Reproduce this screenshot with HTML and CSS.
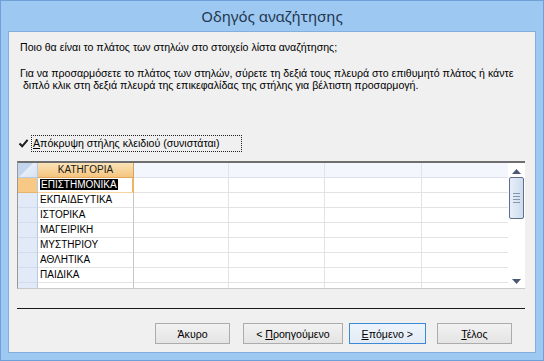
FILE: index.html
```html
<!DOCTYPE html>
<html lang="el">
<head>
  <meta charset="UTF-8">
  <title>Οδηγός αναζήτησης</title>
  <link rel="stylesheet" href="styles.css">
</head>
<body>
  <div class="window">
    <div class="titlebar">Οδηγός αναζήτησης</div>

    <div class="client">
      <p class="question">Ποιο θα είναι το πλάτος των στηλών στο στοιχείο λίστα αναζήτησης;</p>
      <p class="hint">Για να προσαρμόσετε το πλάτος των στηλών, σύρετε τη δεξιά τους πλευρά στο επιθυμητό πλάτος ή κάντε<br>&nbsp;διπλό κλικ στη δεξιά πλευρά της επικεφαλίδας της στήλης για βέλτιστη προσαρμογή.</p>

      <label class="check">
        <span class="box">
          <svg width="11" height="11" viewBox="0 0 11 11"><path d="M1.5 5.5 L4.2 8.3 L9.6 1.8" fill="none" stroke="#1b1b1b" stroke-width="2"/></svg>
        </span>
        <span class="check-label"><u>Α</u>πόκρυψη στήλης κλειδιού (συνιστάται)</span>
      </label>

      <!-- πλέγμα δεδομένων -->
      <div class="grid">
        <div class="grid-body">
          <div class="row head">
            <div class="sel corner"></div>
            <div class="cell c1 caption">ΚΑΤΗΓΟΡΙΑ</div>
            <div class="cell c2"></div>
            <div class="cell c3"></div>
            <div class="cell c4"></div>
            <div class="cell c5"></div>
          </div>
          <div class="row current">
            <div class="sel"></div>
            <div class="cell c1 focus"><span class="hl">ΕΠΙΣΤΗΜΟΝΙΚΑ</span></div>
            <div class="cell c2"></div><div class="cell c3"></div><div class="cell c4"></div><div class="cell c5"></div>
          </div>
          <div class="row">
            <div class="sel"></div>
            <div class="cell c1">ΕΚΠΑΙΔΕΥΤΙΚΑ</div>
            <div class="cell c2"></div><div class="cell c3"></div><div class="cell c4"></div><div class="cell c5"></div>
          </div>
          <div class="row">
            <div class="sel"></div>
            <div class="cell c1">ΙΣΤΟΡΙΚΑ</div>
            <div class="cell c2"></div><div class="cell c3"></div><div class="cell c4"></div><div class="cell c5"></div>
          </div>
          <div class="row">
            <div class="sel"></div>
            <div class="cell c1">ΜΑΓΕΙΡΙΚΗ</div>
            <div class="cell c2"></div><div class="cell c3"></div><div class="cell c4"></div><div class="cell c5"></div>
          </div>
          <div class="row">
            <div class="sel"></div>
            <div class="cell c1">ΜΥΣΤΗΡΙΟΥ</div>
            <div class="cell c2"></div><div class="cell c3"></div><div class="cell c4"></div><div class="cell c5"></div>
          </div>
          <div class="row">
            <div class="sel"></div>
            <div class="cell c1">ΑΘΛΗΤΙΚΑ</div>
            <div class="cell c2"></div><div class="cell c3"></div><div class="cell c4"></div><div class="cell c5"></div>
          </div>
          <div class="row">
            <div class="sel"></div>
            <div class="cell c1">ΠΑΙΔΙΚΑ</div>
            <div class="cell c2"></div><div class="cell c3"></div><div class="cell c4"></div><div class="cell c5"></div>
          </div>
          <div class="row">
            <div class="sel"></div>
            <div class="cell c1"></div>
            <div class="cell c2"></div><div class="cell c3"></div><div class="cell c4"></div><div class="cell c5"></div>
          </div>
        </div>
        <div class="scrollbar">
          <svg class="arrow" width="9" height="5" viewBox="0 0 9 5"><path d="M0 5 L4.5 0 L9 5 Z" fill="#4a5a72"/></svg>
          <div class="thumb"><span></span><span></span><span></span><span></span></div>
          <div class="track"></div>
          <svg class="arrow" width="9" height="5" viewBox="0 0 9 5"><path d="M0 0 L4.5 5 L9 0 Z" fill="#4a5a72"/></svg>
        </div>
      </div>

      <div class="separator"></div>

      <div class="buttons">
        <button class="btn">Άκυρο</button>
        <button class="btn wide">&lt; <u>Π</u>ροηγούμενο</button>
        <button class="btn default"><u>Ε</u>πόμενο &gt;</button>
        <button class="btn"><u>Τ</u>έλος</button>
      </div>
    </div>
  </div>
</body>
</html>
```

FILE: styles.css
```css
* {
  margin: 0;
  padding: 0;
  box-sizing: border-box;
}

body {
  font-family: 'Liberation Sans', Arial, sans-serif;
  font-size: 10.6px;
  color: #000;
  background: #9dc8f1;
}

.window {
  width: 544px;
  height: 361px;
  background: #9dc8f1;
  border: 1px solid #6f9fd6;
  padding: 0 7px 7px 7px;
  display: flex;
  flex-direction: column;
}

.titlebar {
  height: 30px;
  line-height: 30px;
  text-align: center;
  font-family: 'Noto Sans', 'Open Sans', sans-serif;
  font-size: 15px;
  color: #23364f;
}

.client {
  flex: 1;
  background: #f0f0f0;
  border: 1px solid #84ade0;
  padding: 9px 10px 0 11px;
}

.question {
  line-height: 13px;
  white-space: nowrap;
}

.hint {
  margin-top: 13px;
  line-height: 12px;
  white-space: nowrap;
}

/* checkbox */
.check {
  display: flex;
  align-items: center;
  margin-top: 44px;
  margin-left: -2px;
  height: 17px;
}

.box {
  width: 11px;
  height: 11px;
  display: flex;
  margin-right: 2px;
}

.check-label {
  border: 1px dotted #222;
  height: 17px;
  line-height: 15px;
  padding: 0 3px 0 1px;
  width: 211px;
}

/* grid */
.grid {
  margin-top: 9px;
  margin-left: -3px;
  width: 508px;
  height: 128px;
  display: flex;
  background: #fff;
  border-top: 2px solid #6e6e6e;
  border-left: 1px solid #9a9a9a;
  border-bottom: 1px solid #c8c8c8;
  overflow: hidden;
}

.grid-body {
  flex: 1;
  overflow: hidden;
}

.row {
  display: flex;
  height: 15px;
  line-height: 14px;
}

.sel {
  width: 20px;
  flex: none;
  background: #e1eaf6;
  border-right: 1px solid #b8c9e0;
  border-bottom: 1px solid #d3dded;
}

.sel.corner {
  background: linear-gradient(135deg, #c3d5ee 0%, #c3d5ee 45%, #e6eef9 46%, #d6e2f2 100%);
  border-bottom: 1px solid #b8c9e0;
}

.current .sel {
  background: #f7c984;
  border-bottom-color: #e8b46a;
}

.cell {
  flex: none;
  border-right: 1px solid #e3e3e3;
  border-bottom: 1px solid #e3e3e3;
  padding-left: 2px;
  white-space: nowrap;
  overflow: hidden;
  font-size: 10px;
}

.c1 { width: 96px; border-right-color: #c6c6c6; }
.c2 { width: 95px; }
.c3 { width: 96px; }
.c4 { width: 97px; }
.c5 { flex: 1; border-right: none; }

.head .cell {
  background: #f4f6fd;
  border-bottom-color: #dde2ee;
}

.head .caption {
  background: linear-gradient(#fbe3b8, #f5c57e);
  border-right-color: #d9a35c;
  border-bottom-color: #e0a95e;
  text-align: center;
  padding-left: 0;
  color: #1a1a1a;
}

.focus {
  border-right: 2px solid #f2b463;
  border-bottom-color: #f6d3a0;
}

.hl {
  background: #000;
  color: #fff;
  padding: 0 1px;
}

/* scrollbar */
.scrollbar {
  width: 17px;
  flex: none;
  display: flex;
  flex-direction: column;
  align-items: center;
  padding: 6px 0 4px;
  background: #fff;
}

.thumb {
  margin-top: 3px;
  width: 15px;
  height: 42px;
  border: 1px solid #5f6f8a;
  border-radius: 2px;
  background: linear-gradient(90deg, #e7eef8, #cfdcee);
  display: flex;
  flex-direction: column;
  align-items: center;
  justify-content: center;
  gap: 2px;
}

.thumb span {
  width: 7px;
  height: 1px;
  background: #8596b0;
}

.track {
  flex: 1;
}

/* bottom */
.separator {
  margin-top: 19px;
  margin-left: -3px;
  width: 508px;
  height: 1px;
  background: #1a1a1a;
}

.buttons {
  display: flex;
  margin-top: 14px;
  margin-left: 135px;
}

.btn {
  font-family: 'Liberation Sans', Arial, sans-serif;
  font-size: 10.6px;
  width: 77px;
  height: 21px;
  margin-right: 13px;
  border: 1px solid #acacac;
  background: linear-gradient(#f2f2f2, #e4e4e4);
  color: #000;
}

.btn.wide {
  width: 102px;
  margin-right: 6px;
}

.btn.default {
  width: 79px;
  margin-right: 11px;
  border-color: #3c8ad6;
  background: linear-gradient(#eef4fb, #e2ebf5);
}
```
